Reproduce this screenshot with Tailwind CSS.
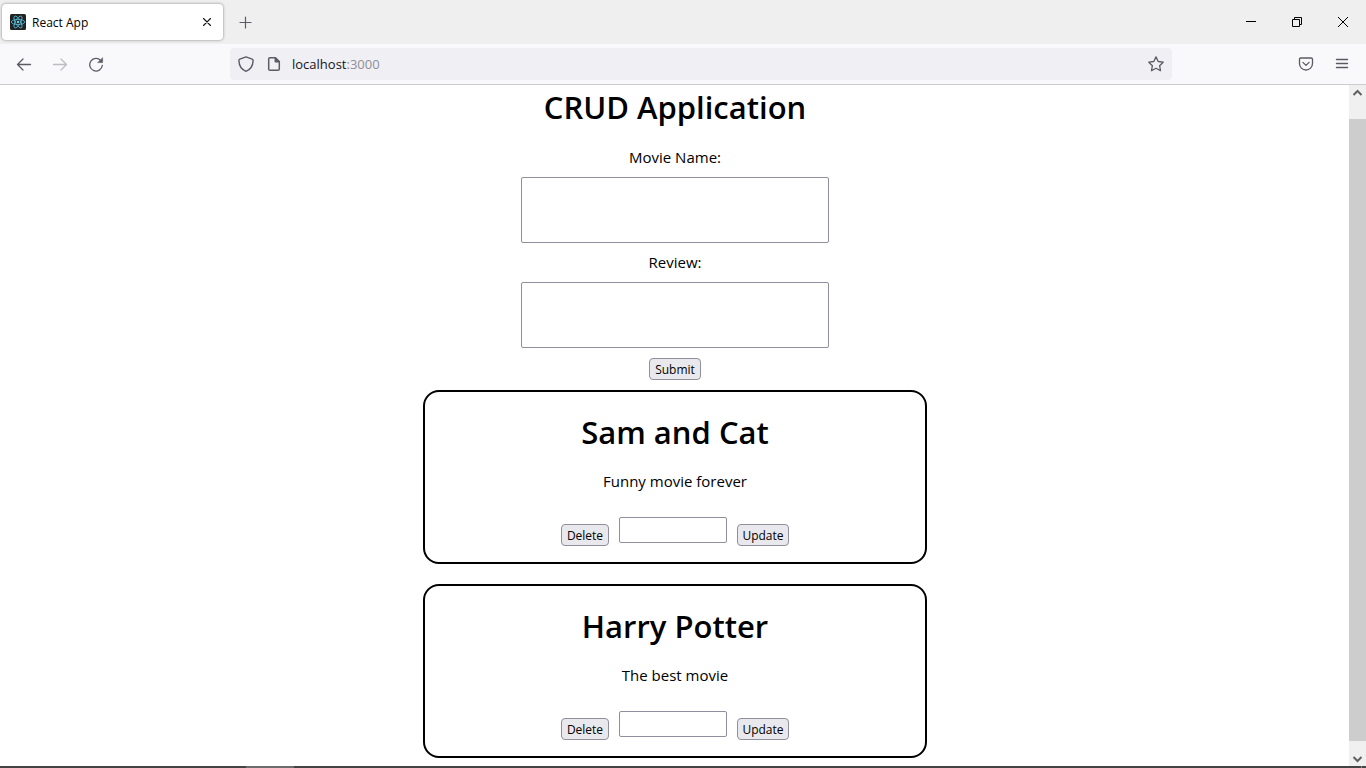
<!DOCTYPE html>
<html lang="en">
<head>
<meta charset="utf-8">
<title>React App</title>
<script src="https://cdn.jsdelivr.net/npm/@tailwindcss/browser@4"></script>
</head>
<body class="flex h-screen flex-col overflow-hidden bg-white font-['Open_Sans','Noto_Sans',sans-serif] text-black">

<!-- Tab strip -->
<header class="flex h-11 shrink-0 items-center bg-[#efefef]">
  <div class="ml-0.5 flex h-9 w-[221px] items-center rounded bg-white pr-2 pl-2 shadow-[0_0_3px_rgba(0,0,0,0.45)]">
    <svg class="size-4 shrink-0" viewBox="0 0 16 16" fill="none" stroke="#53c1de" stroke-width="0.8" aria-hidden="true">
      <rect width="16" height="16" rx="1.5" fill="#222" stroke="none"/>
      <ellipse cx="8" cy="8" rx="6.7" ry="2.6"/>
      <ellipse cx="8" cy="8" rx="6.7" ry="2.6" transform="rotate(60 8 8)"/>
      <ellipse cx="8" cy="8" rx="6.7" ry="2.6" transform="rotate(120 8 8)"/>
      <circle cx="8" cy="8" r="1.2" fill="#61dafb" stroke="none"/>
    </svg>
    <span class="ml-1.5 grow pt-0.5 text-xs">React App</span>
    <button type="button" aria-label="Close tab" class="flex size-4 items-center justify-center">
      <svg class="size-4" viewBox="0 0 16 16" fill="none" stroke="#15141a" stroke-width="1.1" stroke-linecap="round"><path d="M4.500 4.500l7 7M11.500 4.500l-7 7"/></svg>
    </button>
  </div>
  <button type="button" aria-label="New tab" class="ml-3.5">
    <svg class="size-4" viewBox="0 0 16 16" fill="none" stroke="#5b5b66" stroke-width="1.2" stroke-linecap="round"><path d="M8.500 3v11M3 8.500h11"/></svg>
  </button>
  <div class="ml-auto flex">
    <button type="button" aria-label="Minimize" class="flex h-11 w-[46px] items-center justify-center">
      <svg class="size-3" viewBox="0 0 12 12" stroke="#000"><path d="M1 5.500h10"/></svg>
    </button>
    <button type="button" aria-label="Restore" class="flex h-11 w-[46px] items-center justify-center">
      <svg class="size-3" viewBox="0 0 12 12" fill="none" stroke="#000"><path d="M1.500 3.500h7v7h-7zM3.500 3.500v-2h7v7h-2"/></svg>
    </button>
    <button type="button" aria-label="Close window" class="flex h-11 w-[46px] items-center justify-center">
      <svg class="size-3" viewBox="0 0 12 12" fill="none" stroke="#000"><path d="M1 1l10 10M11 1L1 11"/></svg>
    </button>
  </div>
</header>

<!-- Navigation toolbar -->
<nav class="flex h-[41px] shrink-0 items-center border-b border-[#cccccf] bg-[#f9f9fb] pl-4" aria-label="Navigation">
  <button type="button" aria-label="Back">
    <svg class="size-4" viewBox="0 0 16 16" fill="none" stroke="#5b5b66" stroke-width="1.300" stroke-linecap="round" stroke-linejoin="round"><path d="M14.500 8.500H1.500M7 3L1.500 8.500 7 14"/></svg>
  </button>
  <button type="button" aria-label="Forward" class="ml-5">
    <svg class="size-4" viewBox="0 0 16 16" fill="none" stroke="#bdbdc2" stroke-width="1.300" stroke-linecap="round" stroke-linejoin="round"><path d="M1.500 8.500h13M9 3l5.500 5.500L9 14"/></svg>
  </button>
  <button type="button" aria-label="Reload" class="ml-5">
    <svg class="size-4" viewBox="0 0 16 16" fill="none" stroke="#5b5b66" stroke-width="1.300" stroke-linecap="round"><path d="M12.800 4.600A6.300 6.300 0 1 0 14.300 9.500"/><path d="M14.600 2v4.600H10z" fill="#5b5b66" stroke="#5b5b66" stroke-width="0.600" stroke-linejoin="round"/></svg>
  </button>
  <div class="mr-[126px] ml-[126px] flex h-8 grow items-center rounded bg-[#f0f0f4] px-2">
    <svg class="size-4 shrink-0" viewBox="0 0 16 16" fill="none" stroke="#5b5b66" stroke-width="1.400" stroke-linejoin="round" aria-hidden="true"><path d="M8 .9L14.200 3.200Q15.200 3.600 15.100 4.600C14.900 9.500 12.300 13.600 8 15.300 3.700 13.600 1.100 9.500.9 4.600Q.8 3.600 1.800 3.200z"/></svg>
    <svg class="ml-3 size-4 shrink-0" viewBox="0 0 16 16" fill="none" stroke="#5b5b66" stroke-width="1.500" stroke-linejoin="round" aria-hidden="true"><path d="M9.300 1.700H4Q2.700 1.700 2.700 3v10Q2.700 14.300 4 14.300h8Q13.300 14.300 13.300 13V5.700z"/><path d="M9.300 1.700v4h4z" fill="#5b5b66"/></svg>
    <div class="ml-2.5 grow pt-0.5 text-[13px]"><span class="text-[#15141a]">localhost</span><span class="text-[#8f8f95]">:3000</span></div>
    <button type="button" aria-label="Bookmark this page">
      <svg class="size-4" viewBox="0 0 16 16" fill="none" stroke="#5b5b66" stroke-width="1.300" stroke-linejoin="round"><path d="M8 .9l2.200 4.600 5 .7-3.600 3.500.9 5L8 12.300l-4.500 2.400.9-5L.8 6.200l5-.7z"/></svg>
    </button>
  </div>
  <button type="button" aria-label="Save to Pocket" class="mr-5">
    <svg class="size-4" viewBox="0 0 16 16" fill="none" stroke="#5b5b66" stroke-width="1.300" stroke-linecap="round" stroke-linejoin="round"><path d="M2.800 2h10.400Q14.500 2 14.500 3.300V7.500A6.500 6.500 0 0 1 1.500 7.500V3.300Q1.500 2 2.800 2z"/><path d="M4.900 6.400L8 9.400l3.100-3"/></svg>
  </button>
  <button type="button" aria-label="Open menu" class="mr-4">
    <svg class="size-4" viewBox="0 0 16 16" stroke="#5b5b66" stroke-width="1.400" stroke-linecap="round"><path d="M2.500 3.500h11M2.500 7.500h11M2.500 11.500h11"/></svg>
  </button>
</nav>

<!-- Page viewport -->
<div class="flex min-h-0 grow">
  <main class="flex grow flex-col items-center overflow-hidden pl-px">
    <h1 class="text-[31px] leading-[45px] font-semibold">CRUD Application</h1>
    <form class="mt-[18px] flex flex-col items-center gap-2.5">
      <label for="movie" class="text-[15px] leading-[19px]">Movie Name:</label>
      <textarea id="movie" class="h-[66px] w-[308px] resize-none rounded-xs border border-[#8f8f9d] bg-white outline-none"></textarea>
      <label for="review" class="text-[15px] leading-[19px]">Review:</label>
      <textarea id="review" class="h-[66px] w-[308px] resize-none rounded-xs border border-[#8f8f9d] bg-white outline-none"></textarea>
      <button type="submit" class="h-[22px] w-[52px] rounded border border-[#8f8f9d] bg-[#e9e9ed] pt-0.5 text-xs">Submit</button>
    </form>

    <article class="mt-2.5 flex w-[504px] flex-col items-center rounded-2xl border-2 border-black pt-5 pb-4">
      <h2 class="text-[31px] leading-10 font-semibold">Sam and Cat</h2>
      <p class="mt-5 text-[15px] leading-[19px]">Funny movie forever</p>
      <div class="mt-[26px] flex h-[29px] items-end gap-2.5">
        <button type="button" class="h-[22px] w-12 rounded border border-[#8f8f9d] bg-[#e9e9ed] pt-0.5 text-xs">Delete</button>
        <input type="text" aria-label="New review for Sam and Cat" class="h-[26px] w-[108px] self-start rounded-xs border border-[#8f8f9d] bg-white outline-none">
        <button type="button" class="h-[22px] w-[52px] rounded border border-[#8f8f9d] bg-[#e9e9ed] pt-0.5 text-xs">Update</button>
      </div>
    </article>

    <article class="mt-5 flex w-[504px] flex-col items-center rounded-2xl border-2 border-black pt-5 pb-4">
      <h2 class="text-[31px] leading-10 font-semibold">Harry Potter</h2>
      <p class="mt-5 text-[15px] leading-[19px]">The best movie</p>
      <div class="mt-[26px] flex h-[29px] items-end gap-2.5">
        <button type="button" class="h-[22px] w-12 rounded border border-[#8f8f9d] bg-[#e9e9ed] pt-0.5 text-xs">Delete</button>
        <input type="text" aria-label="New review for Harry Potter" class="h-[26px] w-[108px] self-start rounded-xs border border-[#8f8f9d] bg-white outline-none">
        <button type="button" class="h-[22px] w-[52px] rounded border border-[#8f8f9d] bg-[#e9e9ed] pt-0.5 text-xs">Update</button>
      </div>
    </article>
  </main>

  <!-- Scrollbar -->
  <div class="flex w-[17px] shrink-0 flex-col bg-[#f0f0f0]" aria-hidden="true">
    <svg class="h-[17px] w-[17px]" viewBox="0 0 17 17" fill="none" stroke="#606060" stroke-width="2"><path d="M4.500 10l4-4 4 4"/></svg>
    <div class="mt-[17px] grow bg-[#cdcdcd]"></div>
    <svg class="mt-2 h-[17px] w-[17px]" viewBox="0 0 17 17" fill="none" stroke="#606060" stroke-width="2"><path d="M4.500 8l4 4 4-4"/></svg>
  </div>
</div>

<!-- Top edge of the taskbar -->
<footer class="flex h-0.5 shrink-0 bg-[#444446]">
  <div class="ml-[246px] h-full w-12 bg-[#6d6d70]"></div>
  <div class="mr-1 ml-auto h-full w-px bg-[#8a8a8a]"></div>
</footer>
</body>
</html>
